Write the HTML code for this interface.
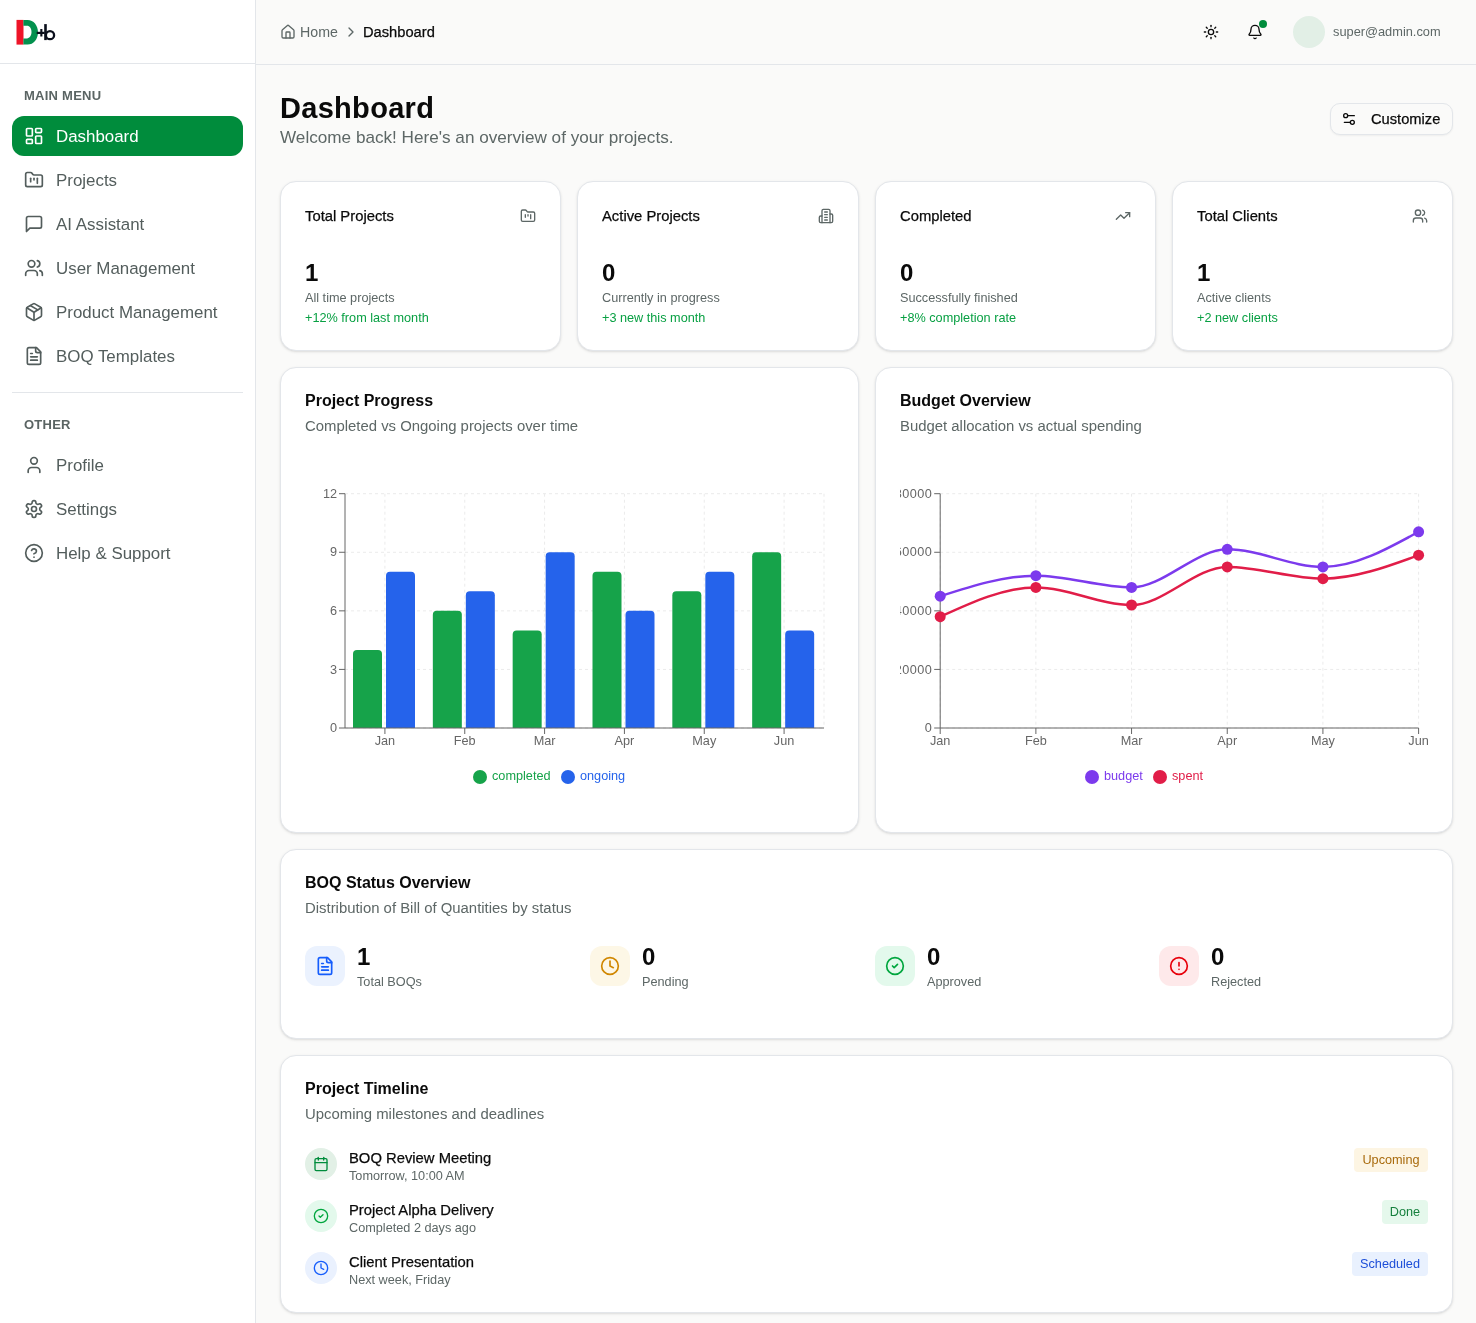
<!DOCTYPE html>
<html><head><meta charset="utf-8"><title>Dashboard</title>
<style>
*{box-sizing:border-box;margin:0;padding:0}
html,body{width:1476px;height:1323px;overflow:hidden}
body{background:#fafaf9;font-family:"Liberation Sans",sans-serif;color:#0a0a0a;position:relative}
.abs{position:absolute}
.t,.sec,.nav span,.badge,svg.abs{will-change:transform}
.t{position:absolute;white-space:nowrap;line-height:20px;height:20px}
svg.ic{position:absolute;fill:none;stroke:currentColor;stroke-linecap:round;stroke-linejoin:round}
#sb{position:absolute;left:0;top:0;width:256px;height:1323px;background:#fff;border-right:1px solid #e3e6ea}
#logo{position:absolute;left:0;top:0;width:255px;height:64px;border-bottom:1px solid #e3e6ea}
.sec{position:absolute;left:24px;font-size:13px;font-weight:700;letter-spacing:.25px;color:#5a6463;line-height:20px;height:20px}
.nav{position:absolute;left:12px;width:231px;height:40px;border-radius:12px;color:#535d5c}
.nav svg{position:absolute;left:12px;top:10px;width:20px;height:20px;fill:none;stroke:currentColor;stroke-width:2;stroke-linecap:round;stroke-linejoin:round}
.nav span{position:absolute;left:44px;top:11px;line-height:20px;font-size:16.9px;white-space:nowrap}
.nav.act{background:#008c3c;color:#fff}
#hdr{position:absolute;left:256px;top:0;width:1220px;height:65px;border-bottom:1px solid #e3e6ea}
.card{position:absolute;background:#fff;border:1px solid #e3e6ea;border-radius:16px;box-shadow:0 1px 3px rgba(0,0,0,.1),0 1px 2px -1px rgba(0,0,0,.1)}
.muted{color:#5d6766}
.sttl{font-size:14.8px;-webkit-text-stroke:.25px currentColor}
.num{font-size:24px;font-weight:700;line-height:32px;height:32px}
.ssub{font-size:12.7px;line-height:16px;height:16px}
.ctl{font-size:16px;font-weight:700;line-height:24px;height:24px}
.csub{font-size:14.9px}
.badge{height:24px;border-radius:4px;font-size:12.7px;line-height:24px;text-align:center;white-space:nowrap}
</style></head><body>

<!-- SIDEBAR -->
<div id="sb">
  <div id="logo">
    <svg class="abs" style="left:0;top:0" width="80" height="64" viewBox="0 0 80 64">
      <rect x="16.5" y="19.9" width="7" height="24.7" fill="#ee1428"/>
      <path d="M23.4 19.9H27.6C33.6 19.9 38 25.3 38 32.25C38 39.2 33.6 44.6 27.6 44.6H23.4V38.4H27C29.6 38.4 31.5 35.7 31.5 32.1C31.5 28.5 29.6 25.8 27 25.8H23.4Z" fill="#03914e"/>
      <rect x="36.7" y="31.8" width="8" height="2.2" fill="#0b0f1c"/>
      <rect x="40.3" y="29" width="2.1" height="7.5" fill="#0b0f1c"/>
      <rect x="44.2" y="24.1" width="2.6" height="16" fill="#0b0f1c"/>
      <ellipse cx="50" cy="35.15" rx="4.1" ry="4.05" fill="none" stroke="#0b0f1c" stroke-width="2.3"/>
    </svg>
  </div>
  <div class="sec" style="top:86px">MAIN MENU</div>
  <div class="nav act" style="top:116px">
    <svg viewBox="0 0 24 24"><rect width="7" height="9" x="3" y="3" rx="1"/><rect width="7" height="5" x="14" y="3" rx="1"/><rect width="7" height="9" x="14" y="12" rx="1"/><rect width="7" height="5" x="3" y="16" rx="1"/></svg>
    <span>Dashboard</span>
  </div>
  <div class="nav" style="top:160px">
    <svg viewBox="0 0 24 24"><path d="M4 20h16a2 2 0 0 0 2-2V8a2 2 0 0 0-2-2h-7.93a2 2 0 0 1-1.66-.9l-.82-1.2A2 2 0 0 0 7.93 3H4a2 2 0 0 0-2 2v13c0 1.1.9 2 2 2Z"/><path d="M8 10v4"/><path d="M12 10v2"/><path d="M16 10v6"/></svg>
    <span>Projects</span>
  </div>
  <div class="nav" style="top:204px">
    <svg viewBox="0 0 24 24"><path d="M21 15a2 2 0 0 1-2 2H7l-4 4V5a2 2 0 0 1 2-2h14a2 2 0 0 1 2 2z"/></svg>
    <span>AI Assistant</span>
  </div>
  <div class="nav" style="top:248px">
    <svg viewBox="0 0 24 24"><path d="M16 21v-2a4 4 0 0 0-4-4H6a4 4 0 0 0-4 4v2"/><circle cx="9" cy="7" r="4"/><path d="M22 21v-2a4 4 0 0 0-3-3.87"/><path d="M16 3.13a4 4 0 0 1 0 7.75"/></svg>
    <span>User Management</span>
  </div>
  <div class="nav" style="top:292px">
    <svg viewBox="0 0 24 24"><path d="M11 21.73a2 2 0 0 0 2 0l7-4A2 2 0 0 0 21 16V8a2 2 0 0 0-1-1.73l-7-4a2 2 0 0 0-2 0l-7 4A2 2 0 0 0 3 8v8a2 2 0 0 0 1 1.73z"/><path d="M12 22V12"/><path d="m3.3 7 7.703 4.734a2 2 0 0 0 1.994 0L20.7 7"/><path d="m7.5 4.27 9 5.15"/></svg>
    <span>Product Management</span>
  </div>
  <div class="nav" style="top:336px">
    <svg viewBox="0 0 24 24"><path d="M15 2H6a2 2 0 0 0-2 2v16a2 2 0 0 0 2 2h12a2 2 0 0 0 2-2V7Z"/><path d="M14 2v4a2 2 0 0 0 2 2h4"/><path d="M10 9H8"/><path d="M16 13H8"/><path d="M16 17H8"/></svg>
    <span>BOQ Templates</span>
  </div>
  <div class="abs" style="left:12px;top:392px;width:231px;height:1px;background:#e3e6ea"></div>
  <div class="sec" style="top:415px">OTHER</div>
  <div class="nav" style="top:445px">
    <svg viewBox="0 0 24 24"><path d="M19 21v-2a4 4 0 0 0-4-4H9a4 4 0 0 0-4 4v2"/><circle cx="12" cy="7" r="4"/></svg>
    <span>Profile</span>
  </div>
  <div class="nav" style="top:489px">
    <svg viewBox="0 0 24 24"><path d="M12.22 2h-.44a2 2 0 0 0-2 2v.18a2 2 0 0 1-1 1.73l-.43.25a2 2 0 0 1-2 0l-.15-.08a2 2 0 0 0-2.73.73l-.22.38a2 2 0 0 0 .73 2.730l.15.1a2 2 0 0 1 1 1.72v.51a2 2 0 0 1-1 1.74l-.15.09a2 2 0 0 0-.73 2.73l.22.38a2 2 0 0 0 2.73.73l.15-.08a2 2 0 0 1 2 0l.43.25a2 2 0 0 1 1 1.73V20a2 2 0 0 0 2 2h.44a2 2 0 0 0 2-2v-.18a2 2 0 0 1 1-1.73l.43-.25a2 2 0 0 1 2 0l.15.08a2 2 0 0 0 2.73-.73l.22-.39a2 2 0 0 0-.73-2.730l-.15-.08a2 2 0 0 1-1-1.74v-.5a2 2 0 0 1 1-1.74l.15-.09a2 2 0 0 0 .73-2.73l-.22-.38a2 2 0 0 0-2.73-.73l-.15.08a2 2 0 0 1-2 0l-.43-.25a2 2 0 0 1-1-1.73V4a2 2 0 0 0-2-2z"/><circle cx="12" cy="12" r="3"/></svg>
    <span>Settings</span>
  </div>
  <div class="nav" style="top:533px">
    <svg viewBox="0 0 24 24"><circle cx="12" cy="12" r="10"/><path d="M9.09 9a3 3 0 0 1 5.83 1c0 2-3 3-3 3"/><path d="M12 17h.01"/></svg>
    <span>Help &amp; Support</span>
  </div>
</div>

<!-- HEADER -->
<div id="hdr">
  <svg class="ic" style="left:24px;top:24px;color:#5d6766" width="16" height="16" viewBox="0 0 24 24" stroke-width="2"><path d="M15 21v-8a1 1 0 0 0-1-1h-4a1 1 0 0 0-1 1v8"/><path d="M3 10a2 2 0 0 1 .709-1.528l7-5.999a2 2 0 0 1 2.582 0l7 5.999A2 2 0 0 1 21 10v9a2 2 0 0 1-2 2H5a2 2 0 0 1-2-2z"/></svg>
  <div class="t muted" style="left:44px;top:22px;font-size:14.2px">Home</div>
  <svg class="ic" style="left:86.5px;top:24px;color:#5d6766" width="16" height="16" viewBox="0 0 24 24" stroke-width="2"><path d="m9 18 6-6-6-6"/></svg>
  <div class="t" style="left:107px;top:22px;font-size:14.7px;color:#0a0a0a;-webkit-text-stroke:.25px currentColor">Dashboard</div>
  <svg class="ic" style="left:947px;top:24px;color:#0a0a0a" width="16" height="16" viewBox="0 0 24 24" stroke-width="2"><circle cx="12" cy="12" r="4"/><path d="M12 2v2"/><path d="M12 20v2"/><path d="m4.93 4.93 1.41 1.41"/><path d="m17.66 17.66 1.41 1.41"/><path d="M2 12h2"/><path d="M20 12h2"/><path d="m6.34 17.66-1.41 1.41"/><path d="m19.07 4.93-1.41 1.41"/></svg>
  <svg class="ic" style="left:991px;top:24px;color:#0a0a0a" width="16" height="16" viewBox="0 0 24 24" stroke-width="2"><path d="M10.268 21a2 2 0 0 0 3.464 0"/><path d="M3.262 15.326A1 1 0 0 0 4 17h16a1 1 0 0 0 .74-1.673C19.41 13.956 18 12.499 18 8A6 6 0 0 0 6 8c0 4.499-1.411 5.956-2.738 7.326"/></svg>
  <div class="abs" style="left:1003px;top:20px;width:8px;height:8px;border-radius:50%;background:#008c3c"></div>
  <div class="abs" style="left:1037px;top:16px;width:32px;height:32px;border-radius:50%;background:#e2efe6"></div>
  <div class="t muted" style="left:1077px;top:22px;font-size:12.8px">super@admin.com</div>
</div>

<!-- MAIN -->
<div class="t" style="left:280px;top:90px;line-height:36px;height:36px;font-size:29px;font-weight:700;letter-spacing:.3px">Dashboard</div>
<div class="t muted" style="left:280px;top:125px;line-height:24px;height:24px;font-size:17.15px">Welcome back! Here's an overview of your projects.</div>
<div class="abs" style="left:1330px;top:103px;width:123px;height:32px;border:1px solid #e3e6ea;border-radius:10px;background:#fafaf9;box-shadow:0 1px 2px rgba(0,0,0,.05)">
  <svg class="ic" style="left:10px;top:7px;color:#0a0a0a" width="16" height="16" viewBox="0 0 24 24" stroke-width="2"><path d="M20 7h-9"/><path d="M14 17H5"/><circle cx="17" cy="17" r="3"/><circle cx="7" cy="7" r="3"/></svg>
  <div class="t" style="left:40px;top:5px;font-size:14.7px;-webkit-text-stroke:.25px currentColor">Customize</div>
</div>
<div class="card" style="left:280px;top:181px;width:281.25px;height:170px">
  <div class="t sttl" style="left:24px;top:24px">Total Projects</div>
  <svg class="ic" style="right:24px;top:26px;color:#5d6766" width="16" height="16" viewBox="0 0 24 24" stroke-width="2"><path d="M4 20h16a2 2 0 0 0 2-2V8a2 2 0 0 0-2-2h-7.93a2 2 0 0 1-1.66-.9l-.82-1.2A2 2 0 0 0 7.93 3H4a2 2 0 0 0-2 2v13c0 1.1.9 2 2 2Z"/><path d="M8 10v4"/><path d="M12 10v2"/><path d="M16 10v6"/></svg>
  <div class="t num" style="left:24px;top:75px">1</div>
  <div class="t muted ssub" style="left:24px;top:108px">All time projects</div>
  <div class="t ssub" style="left:24px;top:128px;color:#08a043">+12% from last month</div>
</div>
<div class="card" style="left:577.25px;top:181px;width:281.25px;height:170px">
  <div class="t sttl" style="left:24px;top:24px">Active Projects</div>
  <svg class="ic" style="right:24px;top:26px;color:#5d6766" width="16" height="16" viewBox="0 0 24 24" stroke-width="2"><path d="M6 22V4a2 2 0 0 1 2-2h8a2 2 0 0 1 2 2v18Z"/><path d="M6 12H4a2 2 0 0 0-2 2v6a2 2 0 0 0 2 2h2"/><path d="M18 9h2a2 2 0 0 1 2 2v9a2 2 0 0 1-2 2h-2"/><path d="M10 6h4"/><path d="M10 10h4"/><path d="M10 14h4"/><path d="M10 18h4"/></svg>
  <div class="t num" style="left:24px;top:75px">0</div>
  <div class="t muted ssub" style="left:24px;top:108px">Currently in progress</div>
  <div class="t ssub" style="left:24px;top:128px;color:#08a043">+3 new this month</div>
</div>
<div class="card" style="left:874.5px;top:181px;width:281.25px;height:170px">
  <div class="t sttl" style="left:24px;top:24px">Completed</div>
  <svg class="ic" style="right:24px;top:26px;color:#5d6766" width="16" height="16" viewBox="0 0 24 24" stroke-width="2"><path d="M22 7 13.5 15.5 8.5 10.5 2 17"/><path d="M16 7h6v6"/></svg>
  <div class="t num" style="left:24px;top:75px">0</div>
  <div class="t muted ssub" style="left:24px;top:108px">Successfully finished</div>
  <div class="t ssub" style="left:24px;top:128px;color:#08a043">+8% completion rate</div>
</div>
<div class="card" style="left:1171.75px;top:181px;width:281.25px;height:170px">
  <div class="t sttl" style="left:24px;top:24px">Total Clients</div>
  <svg class="ic" style="right:24px;top:26px;color:#5d6766" width="16" height="16" viewBox="0 0 24 24" stroke-width="2"><path d="M16 21v-2a4 4 0 0 0-4-4H6a4 4 0 0 0-4 4v2"/><circle cx="9" cy="7" r="4"/><path d="M22 21v-2a4 4 0 0 0-3-3.87"/><path d="M16 3.13a4 4 0 0 1 0 7.75"/></svg>
  <div class="t num" style="left:24px;top:75px">1</div>
  <div class="t muted ssub" style="left:24px;top:108px">Active clients</div>
  <div class="t ssub" style="left:24px;top:128px;color:#08a043">+2 new clients</div>
</div>
<div class="card" style="left:280px;top:367px;width:578.5px;height:466px">
  <div class="t ctl" style="left:24px;top:21px">Project Progress</div>
  <div class="t muted csub" style="left:24px;top:48px">Completed vs Ongoing projects over time</div>
</div>
<div class="card" style="left:874.5px;top:367px;width:578.5px;height:466px">
  <div class="t ctl" style="left:24px;top:21px">Budget Overview</div>
  <div class="t muted csub" style="left:24px;top:48px">Budget allocation vs actual spending</div>
</div>
<!--CHARTS-->
<svg class="abs" style="left:280px;top:367px;overflow:visible" width="579" height="466" viewBox="280 367 579 466">
<g stroke="#ebebeb" stroke-dasharray="3 3" fill="none">
<line x1="345.0" y1="728.00" x2="824.0" y2="728.00"/>
<line x1="345.0" y1="669.42" x2="824.0" y2="669.42"/>
<line x1="345.0" y1="610.85" x2="824.0" y2="610.85"/>
<line x1="345.0" y1="552.27" x2="824.0" y2="552.27"/>
<line x1="345.0" y1="493.70" x2="824.0" y2="493.70"/>
<line x1="384.92" y1="493.7" x2="384.92" y2="728.0"/>
<line x1="464.75" y1="493.7" x2="464.75" y2="728.0"/>
<line x1="544.58" y1="493.7" x2="544.58" y2="728.0"/>
<line x1="624.42" y1="493.7" x2="624.42" y2="728.0"/>
<line x1="704.25" y1="493.7" x2="704.25" y2="728.0"/>
<line x1="784.08" y1="493.7" x2="784.08" y2="728.0"/>
<line x1="824.0" y1="493.7" x2="824.0" y2="728.0"/>
</g>
<path d="M353.00,728.0V653.90A4,4 0 0 1 357.00,649.90H378.00A4,4 0 0 1 382.00,653.90V728.0Z" fill="#16a34a"/>
<path d="M386.00,728.0V575.80A4,4 0 0 1 390.00,571.80H411.00A4,4 0 0 1 415.00,575.80V728.0Z" fill="#2563eb"/>
<path d="M432.83,728.0V614.85A4,4 0 0 1 436.83,610.85H457.83A4,4 0 0 1 461.83,614.85V728.0Z" fill="#16a34a"/>
<path d="M465.83,728.0V595.33A4,4 0 0 1 469.83,591.33H490.83A4,4 0 0 1 494.83,595.33V728.0Z" fill="#2563eb"/>
<path d="M512.67,728.0V634.38A4,4 0 0 1 516.67,630.38H537.67A4,4 0 0 1 541.67,634.38V728.0Z" fill="#16a34a"/>
<path d="M545.67,728.0V556.27A4,4 0 0 1 549.67,552.27H570.67A4,4 0 0 1 574.67,556.27V728.0Z" fill="#2563eb"/>
<path d="M592.50,728.0V575.80A4,4 0 0 1 596.50,571.80H617.50A4,4 0 0 1 621.50,575.80V728.0Z" fill="#16a34a"/>
<path d="M625.50,728.0V614.85A4,4 0 0 1 629.50,610.85H650.50A4,4 0 0 1 654.50,614.85V728.0Z" fill="#2563eb"/>
<path d="M672.33,728.0V595.33A4,4 0 0 1 676.33,591.33H697.33A4,4 0 0 1 701.33,595.33V728.0Z" fill="#16a34a"/>
<path d="M705.33,728.0V575.80A4,4 0 0 1 709.33,571.80H730.33A4,4 0 0 1 734.33,575.80V728.0Z" fill="#2563eb"/>
<path d="M752.17,728.0V556.27A4,4 0 0 1 756.17,552.27H777.17A4,4 0 0 1 781.17,556.27V728.0Z" fill="#16a34a"/>
<path d="M785.17,728.0V634.38A4,4 0 0 1 789.17,630.38H810.17A4,4 0 0 1 814.17,634.38V728.0Z" fill="#2563eb"/>
<g stroke="#666" fill="none">
<line x1="345.0" y1="493.7" x2="345.0" y2="728.0"/>
<line x1="345.0" y1="728.0" x2="824.0" y2="728.0"/>
<line x1="339.0" y1="728.00" x2="345.0" y2="728.00"/>
<line x1="339.0" y1="669.42" x2="345.0" y2="669.42"/>
<line x1="339.0" y1="610.85" x2="345.0" y2="610.85"/>
<line x1="339.0" y1="552.27" x2="345.0" y2="552.27"/>
<line x1="339.0" y1="493.70" x2="345.0" y2="493.70"/>
<line x1="384.92" y1="728.0" x2="384.92" y2="734.0"/>
<line x1="464.75" y1="728.0" x2="464.75" y2="734.0"/>
<line x1="544.58" y1="728.0" x2="544.58" y2="734.0"/>
<line x1="624.42" y1="728.0" x2="624.42" y2="734.0"/>
<line x1="704.25" y1="728.0" x2="704.25" y2="734.0"/>
<line x1="784.08" y1="728.0" x2="784.08" y2="734.0"/>
</g>
<g fill="#666" font-family="Liberation Sans" font-size="12.7">
<text x="337.0" y="732.10" text-anchor="end">0</text>
<text x="337.0" y="673.52" text-anchor="end">3</text>
<text x="337.0" y="614.95" text-anchor="end">6</text>
<text x="337.0" y="556.38" text-anchor="end">9</text>
<text x="337.0" y="497.80" text-anchor="end">12</text>
<text x="384.92" y="744.50" text-anchor="middle">Jan</text>
<text x="464.75" y="744.50" text-anchor="middle">Feb</text>
<text x="544.58" y="744.50" text-anchor="middle">Mar</text>
<text x="624.42" y="744.50" text-anchor="middle">Apr</text>
<text x="704.25" y="744.50" text-anchor="middle">May</text>
<text x="784.08" y="744.50" text-anchor="middle">Jun</text>
</g>
<circle cx="480" cy="777" r="7" fill="#16a34a"/><text x="492" y="779.8" fill="#16a34a" font-family="Liberation Sans" font-size="12.7">completed</text>
<circle cx="568" cy="777" r="7" fill="#2563eb"/><text x="580" y="779.8" fill="#2563eb" font-family="Liberation Sans" font-size="12.7">ongoing</text>
</svg>
<svg class="abs" style="left:900px;top:367px" width="553" height="466" viewBox="900 367 553 466">
<g stroke="#ebebeb" stroke-dasharray="3 3" fill="none">
<line x1="940.2" y1="728.00" x2="1418.6" y2="728.00"/>
<line x1="940.2" y1="669.42" x2="1418.6" y2="669.42"/>
<line x1="940.2" y1="610.85" x2="1418.6" y2="610.85"/>
<line x1="940.2" y1="552.27" x2="1418.6" y2="552.27"/>
<line x1="940.2" y1="493.70" x2="1418.6" y2="493.70"/>
<line x1="940.20" y1="493.7" x2="940.20" y2="728.0"/>
<line x1="1035.88" y1="493.7" x2="1035.88" y2="728.0"/>
<line x1="1131.56" y1="493.7" x2="1131.56" y2="728.0"/>
<line x1="1227.24" y1="493.7" x2="1227.24" y2="728.0"/>
<line x1="1322.92" y1="493.7" x2="1322.92" y2="728.0"/>
<line x1="1418.60" y1="493.7" x2="1418.60" y2="728.0"/>
</g>
<g stroke="#666" fill="none">
<line x1="940.2" y1="493.7" x2="940.2" y2="728.0"/>
<line x1="940.2" y1="728.0" x2="1418.6" y2="728.0"/>
<line x1="934.2" y1="728.00" x2="940.2" y2="728.00"/>
<line x1="934.2" y1="669.42" x2="940.2" y2="669.42"/>
<line x1="934.2" y1="610.85" x2="940.2" y2="610.85"/>
<line x1="934.2" y1="552.27" x2="940.2" y2="552.27"/>
<line x1="934.2" y1="493.70" x2="940.2" y2="493.70"/>
<line x1="940.20" y1="728.0" x2="940.20" y2="734.0"/>
<line x1="1035.88" y1="728.0" x2="1035.88" y2="734.0"/>
<line x1="1131.56" y1="728.0" x2="1131.56" y2="734.0"/>
<line x1="1227.24" y1="728.0" x2="1227.24" y2="734.0"/>
<line x1="1322.92" y1="728.0" x2="1322.92" y2="734.0"/>
<line x1="1418.60" y1="728.0" x2="1418.60" y2="734.0"/>
</g>
<g fill="#666" font-family="Liberation Sans" font-size="12.7">
<text x="932.2" y="732.10" text-anchor="end" letter-spacing="0.45">0</text>
<text x="932.2" y="673.52" text-anchor="end" letter-spacing="0.45">20000</text>
<text x="932.2" y="614.95" text-anchor="end" letter-spacing="0.45">40000</text>
<text x="932.2" y="556.38" text-anchor="end" letter-spacing="0.45">60000</text>
<text x="932.2" y="497.80" text-anchor="end" letter-spacing="0.45">80000</text>
<text x="940.20" y="744.50" text-anchor="middle">Jan</text>
<text x="1035.88" y="744.50" text-anchor="middle">Feb</text>
<text x="1131.56" y="744.50" text-anchor="middle">Mar</text>
<text x="1227.24" y="744.50" text-anchor="middle">Apr</text>
<text x="1322.92" y="744.50" text-anchor="middle">May</text>
<text x="1418.60" y="744.50" text-anchor="middle">Jun</text>
</g>
<path d="M940.20,596.21C972.09,585.96,1003.99,575.71,1035.88,575.71C1067.77,575.71,1099.67,587.42,1131.56,587.42C1163.45,587.42,1195.35,549.35,1227.24,549.35C1259.13,549.35,1291.03,566.92,1322.92,566.92C1354.81,566.92,1386.71,549.35,1418.60,531.77" fill="none" stroke="#7c3aed" stroke-width="2.5"/>
<path d="M940.20,616.71C972.09,602.06,1003.99,587.42,1035.88,587.42C1067.77,587.42,1099.67,604.99,1131.56,604.99C1163.45,604.99,1195.35,566.92,1227.24,566.92C1259.13,566.92,1291.03,578.63,1322.92,578.63C1354.81,578.63,1386.71,566.92,1418.60,555.20" fill="none" stroke="#e11d48" stroke-width="2.5"/>
<circle cx="940.20" cy="596.21" r="5.5" fill="#7c3aed"/>
<circle cx="1035.88" cy="575.71" r="5.5" fill="#7c3aed"/>
<circle cx="1131.56" cy="587.42" r="5.5" fill="#7c3aed"/>
<circle cx="1227.24" cy="549.35" r="5.5" fill="#7c3aed"/>
<circle cx="1322.92" cy="566.92" r="5.5" fill="#7c3aed"/>
<circle cx="1418.60" cy="531.77" r="5.5" fill="#7c3aed"/>
<circle cx="940.20" cy="616.71" r="5.5" fill="#e11d48"/>
<circle cx="1035.88" cy="587.42" r="5.5" fill="#e11d48"/>
<circle cx="1131.56" cy="604.99" r="5.5" fill="#e11d48"/>
<circle cx="1227.24" cy="566.92" r="5.5" fill="#e11d48"/>
<circle cx="1322.92" cy="578.63" r="5.5" fill="#e11d48"/>
<circle cx="1418.60" cy="555.20" r="5.5" fill="#e11d48"/>
<circle cx="1092" cy="777" r="7" fill="#7c3aed"/><text x="1104" y="779.8" fill="#7c3aed" font-family="Liberation Sans" font-size="12.7">budget</text>
<circle cx="1160" cy="777" r="7" fill="#e11d48"/><text x="1172" y="779.8" fill="#e11d48" font-family="Liberation Sans" font-size="12.7">spent</text>
</svg>
<!--/CHARTS-->
<div class="card" style="left:280px;top:849px;width:1173px;height:190px">
  <div class="t ctl" style="left:24px;top:21px">BOQ Status Overview</div>
  <div class="t muted csub" style="left:24px;top:48px">Distribution of Bill of Quantities by status</div>
  <div class="abs" style="left:24px;top:96px;width:40px;height:40px;border-radius:12px;background:#ebf2fe">
    <svg class="ic" style="left:10px;top:10px;color:#155dfc" width="20" height="20" viewBox="0 0 24 24" stroke-width="2"><path d="M15 2H6a2 2 0 0 0-2 2v16a2 2 0 0 0 2 2h12a2 2 0 0 0 2-2V7Z"/><path d="M14 2v4a2 2 0 0 0 2 2h4"/><path d="M10 9H8"/><path d="M16 13H8"/><path d="M16 17H8"/></svg>
  </div>
  <div class="t num" style="left:76px;top:91px">1</div>
  <div class="t muted ssub" style="left:76px;top:124px">Total BOQs</div>
  <div class="abs" style="left:308.75px;top:96px;width:40px;height:40px;border-radius:12px;background:#fdf7e6">
    <svg class="ic" style="left:10px;top:10px;color:#d08700" width="20" height="20" viewBox="0 0 24 24" stroke-width="2"><circle cx="12" cy="12" r="10"/><path d="M12 6v6l4 2"/></svg>
  </div>
  <div class="t num" style="left:360.75px;top:91px">0</div>
  <div class="t muted ssub" style="left:360.75px;top:124px">Pending</div>
  <div class="abs" style="left:593.5px;top:96px;width:40px;height:40px;border-radius:12px;background:#e3f9ec">
    <svg class="ic" style="left:10px;top:10px;color:#00a63e" width="20" height="20" viewBox="0 0 24 24" stroke-width="2"><circle cx="12" cy="12" r="10"/><path d="m9 12 2 2 4-4"/></svg>
  </div>
  <div class="t num" style="left:645.5px;top:91px">0</div>
  <div class="t muted ssub" style="left:645.5px;top:124px">Approved</div>
  <div class="abs" style="left:878.25px;top:96px;width:40px;height:40px;border-radius:12px;background:#fee9ea">
    <svg class="ic" style="left:10px;top:10px;color:#e7000b" width="20" height="20" viewBox="0 0 24 24" stroke-width="2"><circle cx="12" cy="12" r="10"/><line x1="12" x2="12" y1="8" y2="12"/><line x1="12" x2="12.01" y1="16" y2="16"/></svg>
  </div>
  <div class="t num" style="left:930.25px;top:91px">0</div>
  <div class="t muted ssub" style="left:930.25px;top:124px">Rejected</div>
</div>

<div class="card" style="left:280px;top:1055px;width:1173px;height:258px">
  <div class="t ctl" style="left:24px;top:21px">Project Timeline</div>
  <div class="t muted csub" style="left:24px;top:48px">Upcoming milestones and deadlines</div>
  <div class="abs" style="left:24px;top:92px;width:32px;height:32px;border-radius:50%;background:#e2f0e6">
    <svg class="ic" style="left:8px;top:8px;color:#008c3c" width="16" height="16" viewBox="0 0 24 24" stroke-width="2"><path d="M8 2v4"/><path d="M16 2v4"/><rect width="18" height="18" x="3" y="4" rx="2"/><path d="M3 10h18"/></svg>
  </div>
  <div class="t sttl" style="left:68px;top:92px">BOQ Review Meeting</div>
  <div class="t muted ssub" style="left:68px;top:111.5px">Tomorrow, 10:00 AM</div>
  <div class="abs badge" style="right:24px;top:92px;width:74px;background:#fdf5e3;color:#a86a0c">Upcoming</div>
  <div class="abs" style="left:24px;top:144px;width:32px;height:32px;border-radius:50%;background:#e3f9ec">
    <svg class="ic" style="left:8px;top:8px;color:#00a63e" width="16" height="16" viewBox="0 0 24 24" stroke-width="2"><circle cx="12" cy="12" r="10"/><path d="m9 12 2 2 4-4"/></svg>
  </div>
  <div class="t sttl" style="left:68px;top:144px">Project Alpha Delivery</div>
  <div class="t muted ssub" style="left:68px;top:163.5px">Completed 2 days ago</div>
  <div class="abs badge" style="right:24px;top:144px;width:46px;background:#e5f8ec;color:#15803d">Done</div>
  <div class="abs" style="left:24px;top:196px;width:32px;height:32px;border-radius:50%;background:#eaf1fe">
    <svg class="ic" style="left:8px;top:8px;color:#155dfc" width="16" height="16" viewBox="0 0 24 24" stroke-width="2"><circle cx="12" cy="12" r="10"/><path d="M12 6v6l4 2"/></svg>
  </div>
  <div class="t sttl" style="left:68px;top:196px">Client Presentation</div>
  <div class="t muted ssub" style="left:68px;top:215.5px">Next week, Friday</div>
  <div class="abs badge" style="right:24px;top:196px;width:76px;background:#e9f1fe;color:#1d4ed8">Scheduled</div>
</div>


</body></html>
